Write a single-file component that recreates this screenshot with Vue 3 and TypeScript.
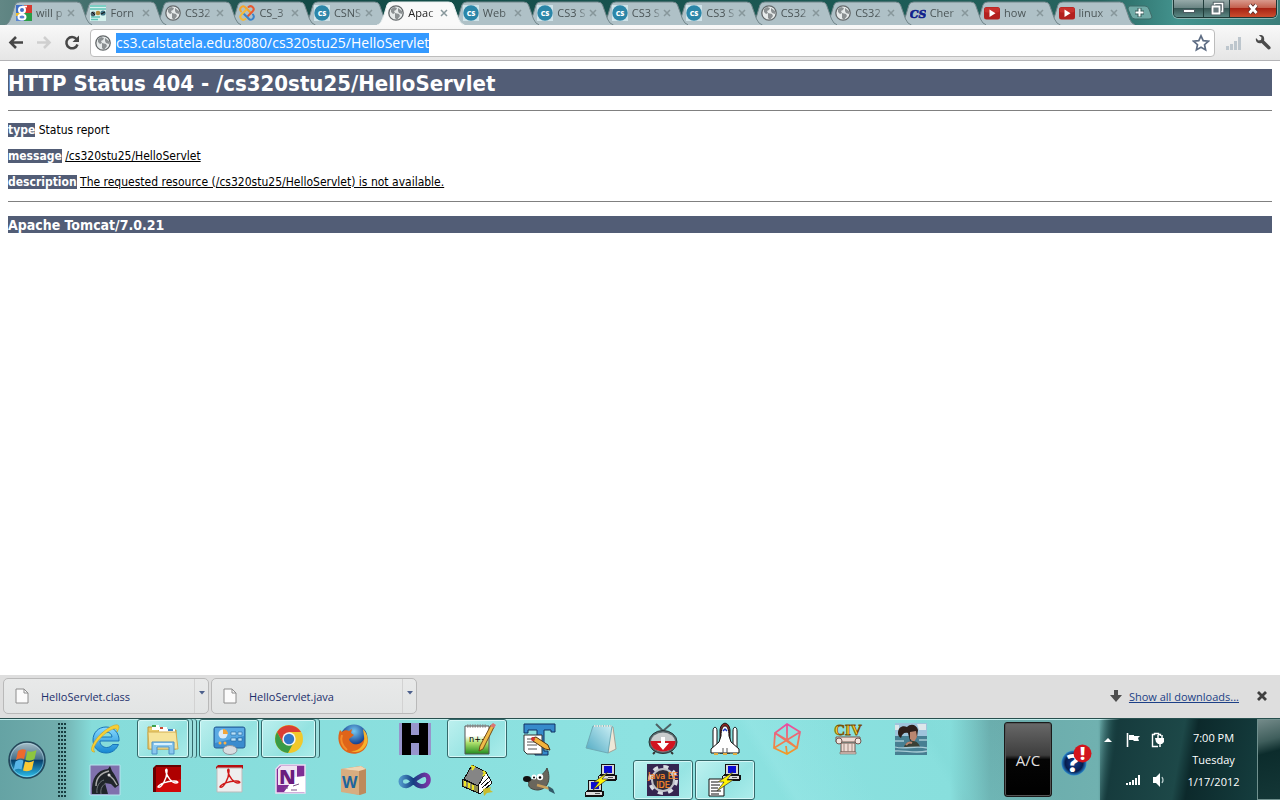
<script setup lang="ts">
import { onMounted, ref } from 'vue'

interface Tab { icon: string; title: string; active?: boolean }
interface App { name: string; icon: string; open?: boolean; stack?: number }

const address = ref('cs3.calstatela.edu:8080/cs320stu25/HelloServlet')
const addressBox = ref<HTMLInputElement | null>(null)

onMounted(() => {
  addressBox.value?.focus()
  addressBox.value?.select()
})

const tabs: Tab[] = [
  { icon: 'google', title: 'will p' },
  { icon: 'forum', title: 'Forn' },
  { icon: 'globe', title: 'CS32' },
  { icon: 'joomla', title: 'CS_3' },
  { icon: 'cs', title: 'CSNS' },
  { icon: 'globe', title: 'Apac', active: true },
  { icon: 'cs', title: 'Web' },
  { icon: 'cs', title: 'CS3 S' },
  { icon: 'cs', title: 'CS3 S' },
  { icon: 'cs', title: 'CS3 S' },
  { icon: 'globe', title: 'CS32' },
  { icon: 'globe', title: 'CS32' },
  { icon: 'csblue', title: 'Cher' },
  { icon: 'tube', title: 'how' },
  { icon: 'tube', title: 'linux' }
]

const favicons: Record<string, string> = {
  google: '<path d="M0 0h9v8H0z" fill="#3f6fc4"/><path d="M8 0h8v8H8z" fill="#d8392f"/><path d="M8 8h8v8H8z" fill="#2a9d47"/><path d="M0 8h8v8H0z" fill="#5b86d0"/><path d="M0 8h5v3H0z" fill="#f0bd2e"/><circle cx="6" cy="5" r="3" fill="#3f6fc4" stroke="#fff" stroke-width="2"/><ellipse cx="6" cy="12" rx="3.500" ry="2.600" fill="#5b86d0" stroke="#fff" stroke-width="2"/><path d="M6 1.500h5" stroke="#fff" stroke-width="1.600"/>',
  forum: '<rect width="16" height="16" fill="#d5f2ee"/><path d="M0 1h16M0 4h16M1 12h9M1 14.500h7" stroke="#5fc3b6" stroke-width="1.500"/><circle cx="3" cy="9" r="2.400" fill="#475d68"/><circle cx="8" cy="8" r="2.300" fill="#b18a3f"/><circle cx="13" cy="8" r="2.600" fill="#3d7284"/><path d="M2 7l3 3M11 9l4-2" stroke="#111"/>',
  globe: '<circle cx="8" cy="8" r="7.200" fill="#e6eaea" stroke="#63686a" stroke-width="1.300"/><path d="M3 4l3-2 3 1-1 2-2 1 1 2-2 1-2-2z" fill="#8b9092"/><path d="M10 3l4 3v3l-3-1-1-2zM7 8l4 1 1 2-3 4-2-2z" fill="#8b9092"/>',
  joomla: '<g fill="none" stroke-width="2" stroke-linecap="round"><path d="M2 6.500C-.5 3 4-.5 6.500 2.500L11 7" stroke="#f6a42a"/><path d="M9.500 2C13-.5 16.500 4 13.500 6.500L9 11" stroke="#e8572f"/><path d="M14 9.500c2.500 3.500-2 7-4.500 4L5 9" stroke="#3a83c9"/><path d="M6.500 14C3 16.500-.5 12 2.500 9.500L7 5" stroke="#f3ba3a"/></g>',
  cs: '<rect width="16" height="16" fill="#cfe3e9"/><circle cx="8" cy="8" r="7.700" fill="#2b86a8"/><text x="8" y="11" text-anchor="middle" font-family="Open Sans,sans-serif" font-weight="800" font-size="7" fill="#fff">CS</text>',
  csblue: '<text x="8" y="13" text-anchor="middle" font-family="DejaVu Serif,serif" font-style="italic" font-weight="700" font-size="11" fill="#11218c" stroke="#11218c" stroke-width=".6">CS</text>',
  tube: '<rect y="2" width="16" height="12.500" rx="2.500" fill="#b3201f"/><rect x=".5" y="2.500" width="15" height="5" rx="2" fill="#c8302d"/><path d="M5.500 4.500v7.500l6-3.700z" fill="#fff"/>'
}

const apps: App[] = [
  { name: 'Internet Explorer', icon: 'ie' },
  { name: 'Windows Explorer', icon: 'folder', open: true, stack: 2 },
  { name: 'Control Panel', icon: 'panel', open: true },
  { name: 'Google Chrome', icon: 'chrome', open: true, stack: 1 },
  { name: 'Firefox', icon: 'firefox' },
  { name: 'H', icon: 'hex' },
  { name: 'Notepad++', icon: 'npp', open: true },
  { name: 'Text editor', icon: 'text' },
  { name: 'Notepad', icon: 'pad' },
  { name: 'Downloader', icon: 'tv' },
  { name: 'Shuttle', icon: 'shuttle' },
  { name: 'Network', icon: 'mesh' },
  { name: 'Civ', icon: 'civ' },
  { name: 'Adventure', icon: 'lara' },
  { name: 'Knight', icon: 'knight' },
  { name: 'Adobe Reader', icon: 'reader' },
  { name: 'Adobe Acrobat', icon: 'acrobat' },
  { name: 'OneNote', icon: 'onenote' },
  { name: 'Word book', icon: 'book' },
  { name: 'Visual Studio', icon: 'loop' },
  { name: 'Spell book', icon: 'tome' },
  { name: 'GIMP', icon: 'gimp' },
  { name: 'PuTTY', icon: 'putty' },
  { name: 'Java EE IDE', icon: 'java', open: true },
  { name: 'Secure copy', icon: 'pscp', open: true }
]

const pc = (x: number, y: number) =>
  `<g transform="translate(${x} ${y})" shape-rendering="crispEdges"><path d="M3 0h14v11h2v4l-2 2H0v-5l3-2z" fill="#111"/><path d="M4 1h12v9H4z" fill="#d7d7d7"/><path d="M6 2h8v7H6z" fill="#0b0bd0"/><path d="M1 12h16v3H1z" fill="#ddd"/><path d="M10 13h5v1h-5z" fill="#555"/></g>`

const adobe = (c: string) =>
  `<path d="M7 23c3 2 9-8 9-16 0-3-2-2-1 1 1 5 6 11 10 11 3 0 2-2-2-2-7 0-15 3-16 6z" fill="none" stroke="${c}" stroke-width="1.500"/>`

const art: Record<string, string> = {
  ie: '<defs><linearGradient id="ieg" x2="0" y2="1"><stop stop-color="#8adcff"/><stop offset="1" stop-color="#1687d2"/></linearGradient></defs><path d="M30 18H11c0 4 3 6.500 6.500 6.500 2.500 0 4.500-1 6-3h6C27 27 23 30 17 30 9 30 4 24 4 17S9 4 17 4c8 0 13.500 6 13 14zm-19-4h12c0-3-2.500-5-6-5s-6 2-6 5z" fill="url(#ieg)" stroke="#1874b8"/><path d="M6 29C-2 30 5 16 14 9 21 3 30-1 30 4c0 2-1 3-2 5 1-5-4-4-11 1C8 17 2 27 6 29z" fill="#f6cf35" stroke="#c99b1d" stroke-width=".5"/>',
  folder: '<path d="M1 4h9l1 3h18v19H1z" fill="#e9ca68" stroke="#bd9638"/><path d="M5 2h7v5H5z" fill="#fff"/><path d="M5 2h4v2H5z" fill="#3da04d"/><path d="M12 4h8v5h-8z" fill="#fff"/><path d="M13 4h3v2h-3z" fill="#c74732"/><path d="M20 6h8v4h-8z" fill="#fff"/><path d="M21 6h5v2h-5z" fill="#3b81c3"/><path d="M1 9h28l2 17H2z" fill="#f6e49b" stroke="#d2ae52"/><path d="M5 31V19h22v12h-5v-7H10v7z" fill="#8ac7ee" stroke="#4c91c5"/><path d="M7 20h18v2H7z" fill="#d7f1ff"/>',
  panel: '<rect x="1" y="4" width="31" height="21" rx="2" fill="#3a8bce" stroke="#295f94"/><path d="M2 5h29v8L2 20z" fill="#5baae4"/><circle cx="10" cy="11" r="4.500" fill="#ddebf5"/><path d="M10 6v5h5a5 5 0 0 0-5-5z" fill="#f2a53a"/><g fill="#b9e2fb" stroke="#24649c" stroke-width=".6"><path d="M18 9h5v3h-5zM25 9h4v3h-4zM18 15h5v3h-5zM25 15h4v3h-4z"/></g><circle cx="7" cy="20" r="1.500" fill="#f5b04b"/><circle cx="12" cy="20" r="1.500" fill="#f5b04b"/><ellipse cx="17" cy="27" rx="7" ry="4.500" fill="#d8dde1" stroke="#8e979e"/>',
  chrome: '<circle cx="16" cy="16" r="14" fill="#f1c82b"/><path d="M4 9A14 14 0 0 1 28 9H16l-6 11z" fill="#da3e32"/><path d="M4 9a14 14 0 0 0 11 21l6-11-11 1z" fill="#399b45"/><circle cx="16" cy="16" r="6.700" fill="#f4f5f3"/><circle cx="16" cy="16" r="5.200" fill="#3177c6"/>',
  firefox: '<defs><radialGradient id="ffg" cx=".5" cy=".25"><stop stop-color="#75c8f0"/><stop offset="1" stop-color="#123b8c"/></radialGradient></defs><circle cx="17" cy="15" r="13.500" fill="url(#ffg)"/><path d="M3 7l2 2c2-2 5-2 7-1l3-2-1 4 3 2-5 4c1 4 5 6 9 5 5-1 8-6 6-12 4 5 5 10 2 15-4 7-14 9-21 4C1 23 0 14 3 7z" fill="#df6419"/><path d="M26 6c6 6 6 14 1 19-3 4-9 5-13 3 8 1 15-7 13-15z" fill="#f6b22d"/><path d="M5 12c-2 5 0 11 5 15" fill="none" stroke="#f38d2c" stroke-width="2"/>',
  hex: '<path fill="#9795cc" d="M0 0h32v32H0z"/><path fill="#000" d="M3 0h26v32H3z"/><path fill="#9795cc" d="M12 0h8v12h-8zM12 20h8v12h-8z"/>',
  npp: '<defs><linearGradient id="nppg" x2="0" y2="1"><stop offset=".35" stop-color="#fff"/><stop offset=".6" stop-color="#aee06c"/><stop offset="1" stop-color="#218b1e"/></linearGradient></defs><path d="M4 3h24v28H4z" fill="url(#nppg)" stroke="#555"/><path d="M6 3h20" stroke="#888" stroke-width="3" stroke-dasharray="1.500 1"/><text x="8" y="19" font-family="DejaVu Sans Condensed,sans-serif" font-size="9">n++</text><path d="M30 2l3 2-11 22-4 2 1-5z" fill="#efbb48" stroke="#754c18"/><path d="M29 3l3-3 3 2-2 3z" fill="#d97573"/>',
  text: '<path d="M1 1h31v8h-4V7h-7v21h4v4H12v-4h2V7H5v3H1z" fill="#368acb" stroke="#102f61"/><path d="M1 12h18v19H4l-3-3z" fill="#fff" stroke="#333"/><path d="M4 16h8M4 19h9M4 22h10M5 26h9" stroke="#555"/><path d="M9 15l4-1 12 8 2 5-5-1-12-8z" fill="#f3b33c" stroke="#513112"/><circle cx="10" cy="16" r="2" fill="#cf3434"/>',
  pad: '<defs><linearGradient id="padg" x1="1" x2="0" y2="1"><stop stop-color="#c9eef4"/><stop offset="1" stop-color="#4fa9c2"/></linearGradient></defs><path d="M24 3l4 1 3 22-8 4z" fill="#eee7d7" stroke="#a5a295"/><path d="M8 3h19l-4 27L1 25z" fill="url(#padg)" stroke="#6eabb6"/><path d="M9 3h18" stroke="#e5e5df" stroke-width="2" stroke-dasharray="1.500 1"/>',
  tv: '<path d="M9 1l7 7 8-7" fill="none" stroke="#4f6265" stroke-width="2"/><ellipse cx="16" cy="19" rx="14" ry="11.500" fill="#59696d" stroke="#273436"/><ellipse cx="16" cy="19" rx="12" ry="9.500" fill="#c9cccd"/><path d="M3.500 18h25c0 14-25 14-25 0z" fill="#d21420"/><path d="M14 14h4v6h4l-6 7-6-7h4z" fill="#fff"/><path d="M8 29l-2 2M24 29l2 2" stroke="#333" stroke-width="2"/>',
  shuttle: '<g stroke="#111"><path d="M11 7c1-9 9-9 10 0v23H11z" fill="#882622"/><path d="M4 8c0-5 4-5 4 0v21H4zM24 8c0-5 4-5 4 0v21h-4z" fill="#fff"/><path d="M12 13c0-7 2-10 4-10s4 3 4 10l2 6 8 7v4H2v-4l8-7z" fill="#fff"/></g><path d="M14 8l2-2 2 2" fill="none" stroke="#1a34bd" stroke-width="1.500"/><path d="M14 25v5M18 25v5" stroke="#555"/><path d="M5 30h4v2H5zM14 30h4v2h-4zM24 30h4v2h-4z" fill="#e3ac3c"/>',
  mesh: '<defs><linearGradient id="mg" x2="0" y2="1"><stop stop-color="#e94aa5"/><stop offset="1" stop-color="#f29c22"/></linearGradient></defs><path d="M16 1L29 9 26 25 16 31 3 25 4 10zM4 10l12 7 13-8M3 25l13-8 10 8M16 1v16M4 10l22 15M16 31l-1-8" fill="none" stroke="url(#mg)" stroke-width="1.800"/>',
  civ: '<text x="15" y="12" text-anchor="middle" font-family="Liberation Serif,serif" font-weight="700" font-size="15" fill="#ffd42c" stroke="#795006" stroke-width=".8">CIV</text><path d="M3 14h24v5H3zM8 20h14v9H8z" fill="#eddbd3" stroke="#71564f"/><circle cx="6" cy="18" r="3" fill="#f0e4de" stroke="#71564f"/><circle cx="25" cy="18" r="3" fill="#f0e4de" stroke="#71564f"/><path d="M11 20v9M15 20v9M19 20v9" stroke="#a28b82"/><path d="M7 29h16v2H7z" fill="#dcc6bd" stroke="#71564f" stroke-width=".5"/>',
  lara: '<path fill="#9fc4dc" d="M0 0h32v14H0z"/><path fill="#477f92" d="M0 13h32v19H0z"/><path fill="#dde6ea" d="M22 1h9v6h-7zM0 2h4v5H0z"/><path d="M3 10c0-5 4-8 9-6 4-4 10-2 11 3l-1 7-7 4-2-8c-4-1-6 1-7 5-2-1-3-3-3-5z" fill="#2c1e1b"/><path d="M15 9l6-1 1 6-3 5-4-3z" fill="#b98670"/><path d="M9 24c1-4 5-6 9-6s6 3 7 6z" fill="#3a4136"/><path d="M11 22c2-3 4-3 6-2" stroke="#b98670" stroke-width="2" fill="none"/><path d="M0 18h9M24 17h8M0 24c10 3 20-2 32 1M0 28c9-1 20 3 32 0" fill="none" stroke="#a7cbd5" stroke-width="1.300"/>',
  knight: '<path d="M1 1h30v30H1z" fill="#8071ad" stroke="#b8e3ee"/><path d="M3 30C2 14 8 6 19 5l2-3 2 5c3 4 5 8 7 14l-4 3-4-4-6-1 3 11z" fill="#20252a"/><path d="M7 22c0-8 5-13 13-15M20 11c4 3 6 6 8 10" fill="none" stroke="#aaa" stroke-width="1.500"/><circle cx="20" cy="11" r="1.500" fill="#ddd"/><path d="M8 29c-1-7 3-12 7-13M12 30c-1-6 2-9 5-11" fill="none" stroke="#6c7277"/>',
  reader: '<path d="M2 4l3-3h25v24l-2 3H2z" fill="#680000"/><path d="M5 3h25v25H5z" fill="#d10909"/><path d="M5 3h25v12L5 22z" fill="#ae0000"/>' + adobe('#fff'),
  acrobat: '<path d="M3 3l2-2h25v4H3z" fill="#b70e10"/><path d="M4 4h25v24H4z" fill="#eee" stroke="#bbb"/>' + adobe('#cf1717'),
  onenote: '<path d="M5 1h25v28H1V5z" fill="#7f2e94" stroke="#eed9f2" stroke-width="1.500"/><path d="M3 5l3-3h16v19H3z" fill="#f0e4f3"/><path d="M20 13l10-1v16H9z" fill="#fff"/><text x="4" y="20" font-family="Open Sans,sans-serif" font-weight="800" font-size="20" fill="#6a1c7c">N</text><path d="M18 22l6-2M16 26h6M9 24h4" stroke="#795487"/>',
  book: '<path d="M4 5l20-3 5 3v24l-6 2L4 27z" fill="#bd8a5b"/><path d="M4 5l18 2v24L4 28z" fill="#d7ad80"/><path d="M4 5l20-3 5 3-7 2z" fill="#f0d5b3"/><text x="5" y="24" font-family="Open Sans,sans-serif" font-weight="700" font-size="16" fill="#1c659d">W</text>',
  loop: '<defs><linearGradient id="lg"><stop stop-color="#4d94c7"/><stop offset=".45" stop-color="#143e82"/><stop offset="1" stop-color="#7b32a5"/></linearGradient></defs><path d="M20 13c12-9 13 12 1 9-6-1-8-9-14-9-7 0-7 9 0 9 6-1 7-6 13-9z" fill="none" stroke="url(#lg)" stroke-width="4.500"/>',
  tome: '<g shape-rendering="crispEdges" stroke="#111"><path d="M3 15L11 1l14 7-8 14z" fill="#858585"/><path d="M1 15l16 7v7L1 22z" fill="#8e8c58"/><path d="M17 22l8-14 6 11-11 10h-3z" fill="#fff"/><path d="M20 21l7-7M21 24l8-7"/></g><path d="M4 17v5M8 19v5M12 21v5M10 2l3 1-2 3M22 7l2 2-2 3" fill="none" stroke="#eee526" stroke-width="2"/><path d="M22 25l8-2-1 3 3 2-6 1-3 3z" fill="#c9bc2c"/>',
  gimp: '<path d="M2 13l5 3c6-1 15-6 17-12 4 10 2 21-9 22C9 26 4 23 6 19z" fill="#6a665c" stroke="#42443e"/><ellipse cx="4" cy="15" rx="4" ry="3" fill="#111"/><circle cx="11" cy="13" r="2.500" fill="#fff"/><circle cx="17" cy="13" r="3.200" fill="#fff"/><circle cx="11" cy="13.500" r="1"/><circle cx="17" cy="13.500" r="1.300"/><path d="M14 21l14 4" stroke="#c9a05b" stroke-width="2.500"/><path d="M25 22l5 3 2 5-6-3z" fill="#325a68"/>',
  putty: pc(13, 0) + pc(0, 16) + '<path d="M23 8l-14 10h5l-6 8 15-11h-6z" fill="#fff200" stroke="#333" stroke-width=".7"/>',
  java: '<path fill="#352550" d="M0 0h32v32H0z"/><circle cx="16" cy="16" r="13" fill="none" stroke="#d9dce3" stroke-width="4" stroke-dasharray="5 5.200"/><circle cx="16" cy="16" r="11" fill="#302b39" stroke="#bfc1c8" stroke-width="2"/><g font-family="DejaVu Sans Condensed,sans-serif" font-size="9" fill="#ff8a28" text-anchor="middle" stroke="#ff8a28" stroke-width=".2"><text x="16" y="15">Java EE</text><text x="16" y="24">IDE</text></g>',
  pscp: pc(13, 0) + '<path d="M0 15h15v17H0z" fill="#fff" stroke="#111"/><path d="M2 18h7M2 21h9M2 24h7M2 27h10M2 30h8" stroke="#111"/><path d="M24 8l-15 10h6l-7 9 16-11h-6z" fill="#fff200" stroke="#333" stroke-width=".7"/>'
}

const downloads = ['HelloServlet.class', 'HelloServlet.java']
const path = '/cs320stu25/HelloServlet'
</script>

<template>
  <div class="screen">
    <header class="strip">
      <nav class="tabs" aria-label="Tabs">
        <div
          v-for="(tab, i) in tabs"
          :key="i"
          class="tab"
          :class="{ active: tab.active }"
          :style="{ zIndex: tab.active ? 40 : 30 - i }"
        >
          <svg class="shape" viewBox="0 0 88 24" preserveAspectRatio="none">
            <path d="M0 24C4 23 5 19 7 14L10 4Q11 1 15 1H72Q76 1 77 4L82 18Q84 23 88 24" />
          </svg>
          <svg class="fav" viewBox="0 0 16 16" v-html="favicons[tab.icon]"></svg>
          <button class="title" type="button">{{ tab.title }}</button>
          <button class="close" type="button" aria-label="Close tab">
            <svg viewBox="0 0 10 12"><path d="M2 3l6 6M8 3l-6 6" /></svg>
          </button>
        </div>
      </nav>
      <button class="newtab" type="button" aria-label="New tab">
        <svg viewBox="0 0 26 16">
          <path class="nt" d="M3 1H18Q21 1 22 4L25 12Q25 14 22 14H8Q5 14 4 11L1 4Q1 1 3 1Z" />
          <path class="plus-back" d="M12.500 3v9M8 7.500h9" />
          <path class="plus" d="M12.500 3.500v8M8.500 7.500h8" />
        </svg>
      </button>
      <div class="winctl">
        <button class="min" type="button" aria-label="Minimize">
          <svg viewBox="0 0 16 16"><rect x="2.500" y="8.500" width="11" height="3" fill="#fff" stroke="#4d5c62" /></svg>
        </button>
        <button class="restore" type="button" aria-label="Restore">
          <svg viewBox="0 0 16 16">
            <path d="M5.500 2.500h8v8h-8z" fill="none" stroke="#4d5c62" stroke-width="3.500" />
            <path d="M5.500 2.500h8v8h-8z" fill="none" stroke="#fff" stroke-width="1.600" />
            <path d="M3.500 5.500h7v7h-7z" fill="#69797e" stroke="#4d5c62" stroke-width="3.500" />
            <path d="M3.500 5.500h7v7h-7z" fill="#69797e" stroke="#fff" stroke-width="1.800" />
          </svg>
        </button>
        <button class="quit" type="button" aria-label="Close">
          <svg viewBox="0 0 16 16">
            <path d="M4.500 4l7 8M11.500 4l-7 8" stroke="#5a2c29" stroke-width="4.500" />
            <path d="M4.500 4l7 8M11.500 4l-7 8" stroke="#fff" stroke-width="2.800" />
          </svg>
        </button>
      </div>
    </header>

    <div class="toolbar">
      <button class="tool" type="button" aria-label="Back">
        <svg viewBox="0 0 16 16"><path d="M15 7.500H3M8 2L2.500 7.500 8 13" fill="none" stroke="#474747" stroke-width="2.600" /></svg>
      </button>
      <button class="tool" type="button" aria-label="Forward">
        <svg viewBox="0 0 16 16"><path d="M1 7.500h12M8 2l5.500 5.500L8 13" fill="none" stroke="#cfcfcf" stroke-width="2.600" /></svg>
      </button>
      <button class="tool" type="button" aria-label="Reload">
        <svg viewBox="0 0 16 16">
          <path d="M12.500 4A5.700 5.700 0 1 0 13.500 9.500" fill="none" stroke="#474747" stroke-width="2.500" />
          <path d="M15 .500V7H8.500z" fill="#474747" />
        </svg>
      </button>
      <div class="omnibox">
        <svg class="fav" viewBox="0 0 16 16" v-html="favicons.globe"></svg>
        <input ref="addressBox" v-model="address" type="text" aria-label="Address" spellcheck="false" />
        <button class="star" type="button" aria-label="Bookmark">
          <svg viewBox="0 0 18 18">
            <path d="M9 1.800l2.200 4.800 5.200.6-3.900 3.500 1.100 5.200L9 13.300l-4.600 2.600 1.100-5.200L1.600 7.200l5.200-.6z" fill="#fff" stroke="#5d6c83" stroke-width="1.700" />
          </svg>
        </button>
      </div>
      <button class="tool bars" type="button" aria-label="Signal">
        <svg viewBox="0 0 16 16">
          <path d="M2.500 15v-4M6.500 15V9M10.500 15V6M14.500 15V2" stroke="#bdc6cd" stroke-width="3" />
        </svg>
      </button>
      <button class="tool" type="button" aria-label="Settings">
        <svg viewBox="0 0 16 16">
          <path d="M4 .200L6.500 2.500 6 5 3.500 5.500 1 3C0 7 3 9 6.500 8l6.500 6.200c1.500 1 3.500-1 2.300-2.400L9 5.500C10 2 7.500-1 4 .200z" fill="#4b4b4b" />
        </svg>
      </button>
    </div>

    <main class="page">
      <h1>HTTP Status 404 - {{ path }}</h1>
      <hr />
      <p><b>type</b> Status report</p>
      <p><b>message</b> <u>{{ path }}</u></p>
      <p><b>description</b> <u>The requested resource ({{ path }}) is not available.</u></p>
      <hr />
      <h3>Apache Tomcat/7.0.21</h3>
    </main>

    <section class="shelf" aria-label="Downloads">
      <div v-for="file in downloads" :key="file" class="file">
        <button class="launch" type="button">
          <svg viewBox="0 0 14 16">
            <path d="M1 1h8l4 4v10H1z" fill="#fbfbfb" stroke="#8c8c8c" />
            <path d="M9 1v4h4" fill="none" stroke="#8c8c8c" />
          </svg>
          <span>{{ file }}</span>
        </button>
        <button class="more" type="button" aria-label="Options">
          <svg viewBox="0 0 6 4"><path d="M0 0h6L3 3.500z" fill="#4d608c" /></svg>
        </button>
      </div>
      <div class="all">
        <svg viewBox="0 0 12 12"><path d="M4 0h4v5h4l-6 7-6-7h4z" fill="#4e4e4e" /></svg>
        <a href="#">Show all downloads...</a>
        <button class="dismiss" type="button" aria-label="Close downloads">
          <svg viewBox="0 0 12 12"><path d="M2 2l8 8M10 2l-8 8" stroke="#3f3f3f" stroke-width="2.800" /></svg>
        </button>
      </div>
    </section>

    <footer class="taskbar">
      <div class="startarea">
        <button class="start" type="button" aria-label="Start">
          <svg viewBox="0 0 38 38">
            <defs>
              <linearGradient id="orb" x2="0" y2="1">
                <stop stop-color="#a9bfc8" /><stop offset=".48" stop-color="#45708a" />
                <stop offset=".5" stop-color="#063c68" /><stop offset="1" stop-color="#2ec5f2" />
              </linearGradient>
            </defs>
            <circle cx="19" cy="19" r="18" fill="url(#orb)" stroke="#24475a" stroke-width="1.500" />
            <circle cx="19" cy="19" r="16.500" fill="none" stroke="#b9e2ee" stroke-opacity=".5" />
            <path d="M10 10q4-3 8-1l-2 9q-4-2-8 1z" fill="#ed6a2d" />
            <path d="M19.500 10q4 2 9-1l-2 9q-4 3-9 1z" fill="#8dc63f" />
            <path d="M7.500 20.500q4-3 8-1l-2 9q-4-2-8 1z" fill="#58b5e8" />
            <path d="M17 20.500q5 2 9-1l-2 9q-4 3-9 1z" fill="#fbc933" />
          </svg>
        </button>
        <span class="grip"></span>
      </div>
      <div class="apps">
        <button
          v-for="app in apps"
          :key="app.name"
          class="app"
          :class="{ running: app.open, two: app.stack === 1, three: app.stack === 2 }"
          type="button"
          :aria-label="app.name"
        >
          <svg viewBox="0 0 32 32" v-html="art[app.icon]"></svg>
        </button>
      </div>
      <button class="ac" type="button">A/C</button>
      <button class="help" type="button" aria-label="Help">
        <svg viewBox="0 0 32 32">
          <defs>
            <radialGradient id="hg"><stop stop-color="#123f91" /><stop offset=".7" stop-color="#061c4d" /><stop offset="1" stop-color="#2a8ad0" /></radialGradient>
          </defs>
          <circle cx="14" cy="19" r="12.500" fill="url(#hg)" />
          <text x="13" y="28" text-anchor="middle" font-family="Open Sans,sans-serif" font-size="25" font-weight="800" fill="#fff">?</text>
          <circle cx="22.500" cy="9.500" r="9" fill="#d2141c" />
          <text x="22.500" y="16" text-anchor="middle" font-family="Open Sans,sans-serif" font-size="18" font-weight="800" fill="#fff">!</text>
        </svg>
      </button>
      <div class="tray">
        <div class="icons">
          <button type="button" aria-label="Show hidden icons"><svg viewBox="0 0 16 16"><path d="M4 10h8L8 6z" fill="#fff" /></svg></button>
          <button type="button" aria-label="Action center">
            <svg viewBox="0 0 16 16"><path d="M2.500 1v14" stroke="#fff" stroke-width="1.600" /><path d="M4 3h5v1h6l-2 2 1 3H9L8 8H4z" fill="#fff" /></svg>
          </button>
          <button type="button" aria-label="Power">
            <svg viewBox="0 0 16 16">
              <path d="M8 14.500H2.500v-12h2v-1h4v1h2V4" fill="none" stroke="#fff" stroke-width="1.400" />
              <path d="M5 6h9v4l-2 2h-4l-2-2z" fill="#fff" /><path d="M8 3v4M12 3v4M10 12v3" stroke="#fff" stroke-width="1.500" />
            </svg>
          </button>
          <span></span>
          <button type="button" aria-label="Network">
            <svg viewBox="0 0 16 16"><path d="M2 13v-2M5 13v-3M8 13V8M11 13V6M14 13V3" stroke="#fff" stroke-width="2" /></svg>
          </button>
          <button type="button" aria-label="Volume">
            <svg viewBox="0 0 16 16"><path d="M3 5h3l4-4v14l-4-4H3z" fill="#fff" /><path d="M12 5q2 3 0 6" fill="none" stroke="#b9cccc" stroke-width="1.300" /></svg>
          </button>
        </div>
        <div class="clock">
          <time>7:00 PM</time>
          <span>Tuesday</span>
          <span>1/17/2012</span>
        </div>
      </div>
      <button class="desktop" type="button" aria-label="Show desktop"></button>
    </footer>
  </div>
</template>

<style>
body {
  margin: 0;
}
</style>

<style scoped>
.screen {
  display: flex;
  flex-direction: column;
  min-height: 100vh;
  background: #fff;
  font-family: "Open Sans", "Noto Sans", sans-serif;
  font-size: 11px;
}
* {
  box-sizing: border-box;
}
button {
  margin: 0;
  padding: 0;
  border: 0;
  background: none;
  font: inherit;
  color: inherit;
}
svg {
  display: block;
}

/* Tab strip */
.strip {
  display: flex;
  align-items: flex-start;
  height: 25px;
  padding-left: 5px;
  background: linear-gradient(90deg, #628785 0, #3e6b69 8%, #124a46 24%, #1d5b56 70%, #27645f 86%, #43938e 92%, #3b7e7a 100%);
}
.tabs {
  flex: 1;
  display: flex;
  min-width: 0;
}
.tab {
  position: relative;
  flex: 1 1 0;
  min-width: 0;
  display: flex;
  align-items: center;
  gap: 4px;
  height: 25px;
  padding: 0 3px 0 11px;
  color: #4b5557;
}
.shape {
  position: absolute;
  left: 0;
  top: 1px;
  width: calc(100% + 13px);
  height: 24px;
  fill: #afc1c7;
  stroke: #71868b;
}
.tab.active .shape {
  fill: #f9f9f9;
  stroke: #e8eeee;
}
.tab.active {
  color: #222;
}
.fav {
  position: relative;
  flex: none;
  width: 16px;
  height: 16px;
}
.title {
  position: relative;
  flex: 1;
  min-width: 0;
  text-align: left;
  white-space: nowrap;
  line-height: 18px;
  mask-image: linear-gradient(90deg, #000 70%, #0003);
}
.close {
  position: relative;
  flex: none;
  width: 10px;
  margin-left: -2px;
}
.close path {
  stroke: #87979b;
  stroke-width: 1.5;
}
.newtab {
  width: 26px;
  margin: 5px 20px 0 5px;
}
.nt {
  fill: #70aaa6;
  stroke: #3d6b68;
}
.plus-back {
  stroke: #345a58;
  stroke-width: 4;
}
.plus {
  stroke: #fff;
  stroke-width: 2;
}
.winctl {
  display: flex;
  height: 18px;
  margin-right: 3px;
  border: 1px solid #1d3735;
  border-top: 0;
  border-radius: 0 0 5px 5px;
  overflow: hidden;
  box-shadow: 0 0 0 1px #8bb3b0;
}
.winctl button {
  display: grid;
  place-items: center;
  background: linear-gradient(#96aaa9 0, #6c8685 45%, #365654 50%, #5d8885 100%);
}
.winctl svg {
  width: 16px;
  height: 16px;
}
.min {
  width: 29px;
}
.winctl .restore {
  width: 27px;
  border-left: 1px solid #203c3a;
  border-right: 1px solid #203c3a;
}
.winctl .quit {
  width: 46px;
  background: linear-gradient(#d99a8d 0, #c4614e 45%, #a82414 50%, #cb4d2e 100%);
}

/* Toolbar */
.toolbar {
  display: flex;
  align-items: center;
  height: 36px;
  padding: 0 9px 0 8px;
  background: linear-gradient(#f8f8f8, #e6e6e6);
  border-bottom: 1px solid #b3b3b6;
}
.tool {
  flex: none;
  width: 16px;
  margin-right: 12px;
}
.tool:nth-child(3) {
  margin-right: 10px;
}
.omnibox {
  flex: 1;
  display: flex;
  align-items: center;
  height: 28px;
  padding: 0 4px;
  background: #fff;
  border: 1px solid #bdbdbd;
  border-radius: 4px;
}
.omnibox input {
  flex: 1;
  min-width: 0;
  height: 20px;
  margin-left: 5px;
  padding: 0;
  border: 0;
  outline: 0;
  font: 14px/20px "Open Sans", "Noto Sans", sans-serif;
  color: #222;
}
.omnibox input::selection {
  background: #3399ff;
  color: #fff;
}
.star {
  width: 18px;
}
.bars {
  margin: 0 14px 0 10px;
}
.tool:last-child {
  margin-right: 0;
}

/* Error page */
.page {
  flex: 1;
  padding: 8px;
  font-family: "DejaVu Sans Condensed", "DejaVu Sans", sans-serif;
  font-size: 12px;
  color: #000;
}
h1,
h3 {
  margin: 0;
  background: #525d76;
  color: #fff;
}
h1 {
  padding-top: 2px;
  font-size: 22px;
  line-height: 25px;
}
h3 {
  padding-top: 1px;
  font-size: 14px;
  line-height: 16px;
}
hr {
  margin: 14px 0;
  border: 0;
  border-top: 1px solid #808080;
}
h1 + hr {
  margin-bottom: 12px;
}
p {
  margin: 0 0 12px;
  line-height: 14px;
}
p b {
  background: #525d76;
  color: #fff;
}
p + hr {
  margin-top: 12px;
}

/* Downloads shelf */
.shelf {
  display: flex;
  align-items: flex-start;
  gap: 2px;
  height: 43px;
  padding: 3px 12px 0 3px;
  background: #dedede;
  color: #1c2f6c;
}
.file {
  display: flex;
  width: 206px;
  height: 36px;
  border: 1px solid #b9b9b9;
  border-radius: 5px;
  background: linear-gradient(#e8e9e9, #e2e4e4);
}
.launch {
  flex: 1;
  display: flex;
  align-items: center;
  gap: 12px;
  padding-left: 11px;
}
.launch svg {
  width: 14px;
  height: 16px;
}
.more {
  width: 14px;
  display: grid;
  place-items: center;
  padding-bottom: 7px;
  border-left: 1px solid #d2d2d2;
}
.more svg {
  width: 6px;
  height: 4px;
}
.all {
  margin-left: auto;
  display: flex;
  align-items: center;
  gap: 7px;
  height: 36px;
}
.all svg {
  width: 12px;
  height: 12px;
}
.all a {
  color: #1c3f86;
}
.dismiss {
  margin-left: 10px;
}

/* Taskbar */
.taskbar {
  display: flex;
  align-items: stretch;
  height: 82px;
  border-top: 1px solid #274f4e;
  box-shadow: inset 0 1px #c4efee;
  background:
    linear-gradient(58deg, transparent 59%, #9ce8e866 60%, transparent 66%, transparent 72%, #7dd6d455 73%, transparent 80%),
    linear-gradient(90deg, #65a3a4 0, #71adad 60px, #86dcda 92px, #8de2e1 50%, #88dfdd calc(100% - 330px), #69aaaa calc(100% - 290px), #70b1b0 calc(100% - 182px), #124040 calc(100% - 162px));
}
.startarea {
  flex: none;
  width: 74px;
  display: flex;
  align-items: center;
  padding-left: 8px;
  gap: 12px;
}
.start {
  width: 38px;
}
.grip {
  width: 8px;
  height: 74px;
  background: radial-gradient(circle at 1px 1px, #173d40 1px, transparent 1px) 0 0 / 3px 4px;
}
.apps {
  flex: 0 1 868px;
  display: grid;
  grid-template-columns: repeat(14, minmax(0, 1fr));
  grid-template-rows: 39px 40px;
  row-gap: 2px;
}
.app {
  display: grid;
  place-items: center;
  margin: 0 1px;
  border: 1px solid transparent;
  border-radius: 3px;
}
.app svg {
  width: 32px;
  height: 32px;
  overflow: visible;
}
.app.running {
  border-color: #34696b;
  background: linear-gradient(135deg, #d6f8f7aa, #a1e7e577 60%, #bdf3f1aa);
  box-shadow: inset 0 0 0 1px #d5f8f7;
}
.app.two {
  margin-right: 6px;
  box-shadow: inset 0 0 0 1px #d5f8f7, 3px 0 #9bdedd, 4px 0 #34696b;
}
.app.three {
  margin-right: 9px;
  box-shadow: inset 0 0 0 1px #d5f8f7, 3px 0 #9bdedd, 4px 0 #34696b, 7px 0 #9bdedd, 8px 0 #34696b;
}
.ac {
  flex: none;
  width: 48px;
  margin: 3px 8px 3px auto;
  border: 1px solid #1a1a1a;
  border-radius: 3px;
  background: linear-gradient(#686868 0, #3e3e3e 44%, #050505 50%, #000 100%);
  color: #e1e1e1;
  font-size: 15px;
  box-shadow: inset 0 0 0 1px #555;
}
.help {
  flex: none;
  width: 32px;
  margin-right: 8px;
}
.tray {
  flex: none;
  width: 157px;
  display: flex;
  align-items: center;
  background: linear-gradient(100deg, transparent 0, #163b3d 12%, #1d4848 50%, #0c292b 58%, #153d3e 100%);
  color: #fff;
}
.icons {
  display: grid;
  grid-template-columns: 16px 16px 16px;
  grid-template-rows: 16px 16px;
  gap: 24px 9px;
}
.clock {
  flex: 1;
  display: flex;
  flex-direction: column;
  padding-left: 4px;
  text-align: center;
  line-height: 22px;
}
.desktop {
  flex: none;
  width: 23px;
  border: 1px solid #71918f;
  border-right: 0;
  background: linear-gradient(165deg, #738a89 0, #3f5e5c 27%, #0c2c2c 42%, #143737 100%);
}
</style>
